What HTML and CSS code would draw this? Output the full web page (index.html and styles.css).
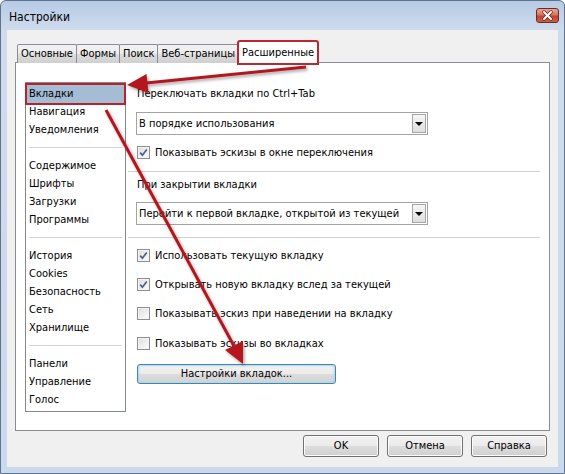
FILE: index.html
```html
<!DOCTYPE html>
<html lang="ru">
<head>
<meta charset="utf-8">
<title>Настройки</title>
<link rel="stylesheet" href="styles.css">
</head>
<body>
<div class="window">
  <div class="titlebar">
    <span class="title">Настройки</span>
    <span class="close">
      <svg width="21" height="13" viewBox="0 0 21 13">
        <path d="M7 3 L14 10 M14 3 L7 10" stroke="#6b2418" stroke-width="3.4" stroke-linecap="round"/>
        <path d="M7 3 L14 10 M14 3 L7 10" stroke="#ffffff" stroke-width="2" stroke-linecap="round"/>
      </svg>
    </span>
  </div>
  <div class="client">
    <div class="tabs">
      <div class="tab">Основные</div>
      <div class="tab">Формы</div>
      <div class="tab">Поиск</div>
      <div class="tab">Веб-страницы</div>
      <div class="tab active">Расширенные</div>
    </div>
    <div class="panel">
      <div class="nav">
        <div class="item selected">Вкладки</div>
        <div class="item">Навигация</div>
        <div class="item">Уведомления</div>
        <div class="nav-sep"></div>
        <div class="item">Содержимое</div>
        <div class="item">Шрифты</div>
        <div class="item">Загрузки</div>
        <div class="item">Программы</div>
        <div class="nav-sep"></div>
        <div class="item">История</div>
        <div class="item">Cookies</div>
        <div class="item">Безопасность</div>
        <div class="item">Сеть</div>
        <div class="item">Хранилище</div>
        <div class="nav-sep"></div>
        <div class="item">Панели</div>
        <div class="item">Управление</div>
        <div class="item">Голос</div>
      </div>
      <div class="content">
        <div class="label first">Переключать вкладки по Ctrl+Tab</div>
        <div class="combo c1"><span class="combo-text">В порядке использования</span><span class="combo-btn"><span class="tri"></span></span></div>
        <div class="check r0"><span class="box on"><svg width="11" height="11" viewBox="0 0 11 11"><path d="M2.2 5.6 L4.4 8.2 L8.8 2.4" fill="none" stroke="#4a5f8c" stroke-width="1.7"/></svg></span><span>Показывать эскизы в окне переключения</span></div>
        <div class="sep s1"></div>
        <div class="label second">При закрытии вкладки</div>
        <div class="combo c2"><span class="combo-text">Перейти к первой вкладке, открытой из текущей</span><span class="combo-btn"><span class="tri"></span></span></div>
        <div class="sep s2"></div>
        <div class="check r1"><span class="box on"><svg width="11" height="11" viewBox="0 0 11 11"><path d="M2.2 5.6 L4.4 8.2 L8.8 2.4" fill="none" stroke="#4a5f8c" stroke-width="1.7"/></svg></span><span>Использовать текущую вкладку</span></div>
        <div class="check r2"><span class="box on"><svg width="11" height="11" viewBox="0 0 11 11"><path d="M2.2 5.6 L4.4 8.2 L8.8 2.4" fill="none" stroke="#4a5f8c" stroke-width="1.7"/></svg></span><span>Открывать новую вкладку вслед за текущей</span></div>
        <div class="check r3"><span class="box"></span><span>Показывать эскиз при наведении на вкладку</span></div>
        <div class="check r4"><span class="box"></span><span>Показывать эскизы во вкладках</span></div>
        <div class="wide-btn">Настройки вкладок...</div>
      </div>
    </div>
    <div class="buttons">
      <div class="btn">OK</div>
      <div class="btn">Отмена</div>
      <div class="btn">Справка</div>
    </div>
  </div>
  <svg class="annot" width="565" height="474" viewBox="0 0 565 474">
    <defs>
      <filter id="sh" x="-20%" y="-20%" width="140%" height="140%">
        <feDropShadow dx="1.5" dy="2" stdDeviation="1.5" flood-color="#000" flood-opacity="0.35"/>
      </filter>
    </defs>
    <g filter="url(#sh)">
      <line x1="306" y1="67" x2="146" y2="83" stroke="#b3161f" stroke-width="3"/>
      <polygon points="127,85 148.5,93 146.5,74" fill="#b3161f"/>
      <line x1="106" y1="110" x2="234" y2="346" stroke="#b3161f" stroke-width="3"/>
      <polygon points="243,364 243,341 225,350" fill="#b3161f"/>
    </g>
  </svg>
</div>
</body>
</html>
```

FILE: styles.css
```css
* { box-sizing: border-box; }
html, body { margin: 0; padding: 0; }
body {
  width: 565px;
  height: 474px;
  overflow: hidden;
  font-family: "DejaVu Sans Condensed", "Liberation Sans", sans-serif;
  font-size: 11px;
  color: #000;
  background: #fff;
}
.window {
  position: relative;
  width: 565px;
  height: 474px;
  border: 1px solid #5d7390;
  border-radius: 6px 6px 0 0;
  background: linear-gradient(to bottom, #b7cbe4 0px, #cfdcee 30px, #cad9eb 100%);
  display: flex;
  flex-direction: column;
}
.titlebar {
  height: 29px;
  display: flex;
  align-items: flex-start;
  justify-content: space-between;
  padding: 0 5px 0 8px;
}
.title {
  font-size: 12px;
  line-height: 12px;
  margin-top: 10px;
  color: #000;
}
.close {
  width: 23px;
  height: 15px;
  margin-top: 7px;
  border: 1px solid #6e2a21;
  border-radius: 3px;
  background: linear-gradient(to bottom, #e8a595 0%, #d57563 45%, #c2432f 55%, #c9604a 100%);
  display: flex;
  align-items: center;
  justify-content: center;
}
.close svg { display: block; }
.client {
  flex: 1;
  margin: 0 6px 6px 6px;
  background: #f0f0f0;
  padding: 11px 8px 0 8px;
  display: flex;
  flex-direction: column;
}
.tabs {
  display: flex;
  align-items: flex-end;
  height: 22px;
  padding-left: 2px;
  position: relative;
  z-index: 2;
}
.tab {
  height: 19px;
  line-height: 17px;
  padding: 0 3px;
  border: 1px solid #898c95;
  border-bottom: none;
  margin-right: -1px;
  background: linear-gradient(to bottom, #f2f2f2 0%, #ebebeb 50%, #dddddd 50%, #cfcfcf 100%);
  border-radius: 2px 2px 0 0;
  white-space: nowrap;
}
.tab.active {
  height: 23px;
  line-height: 21px;
  margin-bottom: -1px;
  background: #fff;
  border-color: #898c95;
  outline: 2px solid #c0262e;
  outline-offset: -1px;
  padding: 0 3px;
}
.panel {
  height: 369px;
  margin-top: -1px;
  border: 1px solid #898c95;
  background: #fff;
  padding: 19px 9px 0 9px;
  display: flex;
  gap: 10px;
}
.nav {
  width: 101px;
  height: 330px;
  border: 1px solid #828790;
  padding: 2px 1px 0 1px;
  flex-shrink: 0;
}
.item {
  height: 18px;
  line-height: 18px;
  padding-left: 2px;
  white-space: nowrap;
}
.item.selected {
  background: #a4bdd4;
  outline: 2px solid #b8232b;
  outline-offset: 0px;
}
.nav-sep {
  height: 1px;
  margin: 8px 2px 9px 2px;
  background: #d4d4d4;
}
.content {
  width: 404px;
  display: flex;
  flex-direction: column;
}
.label {
  height: 18px;
  line-height: 18px;
  padding-left: 1px;
}
.label.first { margin-top: 3px; }
.label.second { margin-top: 4px; }
.combo {
  width: 292px;
  height: 23px;
  border: 1px solid #a3a3a3;
  display: flex;
  align-items: stretch;
  background: #fff;
}
.combo.c1 { margin-top: 9px; }
.combo.c2 { margin-top: 8px; }
.combo-text {
  flex: 1;
  line-height: 21px;
  padding-left: 2px;
  white-space: nowrap;
  overflow: hidden;
}
.combo-btn {
  width: 14px;
  margin: 1px;
  border: 1px solid #a5a5a5;
  background: linear-gradient(to bottom, #f6f6f6, #dedede);
  display: flex;
  align-items: center;
  justify-content: center;
}
.tri {
  width: 0;
  height: 0;
  border-left: 4px solid transparent;
  border-right: 4px solid transparent;
  border-top: 4px solid #000;
}
.check {
  height: 18px;
  display: flex;
  align-items: center;
  gap: 5px;
  padding-left: 1px;
  white-space: nowrap;
}
.check.r0 { margin-top: 8px; }
.check.r1 { margin-top: 8px; }
.check.r2 { margin-top: 11px; }
.check.r3 { margin-top: 11px; }
.check.r4 { margin-top: 12px; }
.box {
  width: 13px;
  height: 13px;
  border: 1px solid #8e8f8f;
  background: linear-gradient(135deg, #dcdcdc 0%, #f4f4f4 70%, #ffffff 100%);
  box-shadow: inset 0 0 0 1px #f4f4f4;
  display: flex;
  align-items: center;
  justify-content: center;
  flex-shrink: 0;
}
.box svg { display: block; }
.sep {
  height: 1px;
  margin-left: -8px;
  width: calc(100% + 8px);
  background: #d0d0d0;
}
.sep.s1 { margin-top: 10px; }
.sep.s2 { margin-top: 12px; }
.wide-btn {
  margin-top: 12px;
  margin-left: 1px;
  width: 199px;
  height: 20px;
  line-height: 18px;
  text-align: center;
  border: 1px solid #4e7fa6;
  border-radius: 3px;
  background: linear-gradient(to bottom, #f3f3f3 0%, #ebebeb 48%, #dcdcdc 52%, #d3d3d3 100%);
  box-shadow: inset 0 0 2px 1px #9fdcf5;
}
.buttons {
  display: flex;
  justify-content: flex-end;
  gap: 8px;
  margin-top: 4px;
  padding-right: 3px;
}
.btn {
  width: 76px;
  height: 22px;
  line-height: 20px;
  text-align: center;
  border: 1px solid #707070;
  border-radius: 3px;
  background: linear-gradient(to bottom, #f2f2f2 0%, #ebebeb 48%, #dddddd 52%, #cfcfcf 100%);
  box-shadow: inset 0 0 0 1px #fcfcfc;
}
.annot {
  position: absolute;
  left: -1px;
  top: -1px;
  pointer-events: none;
  z-index: 5;
}
```
